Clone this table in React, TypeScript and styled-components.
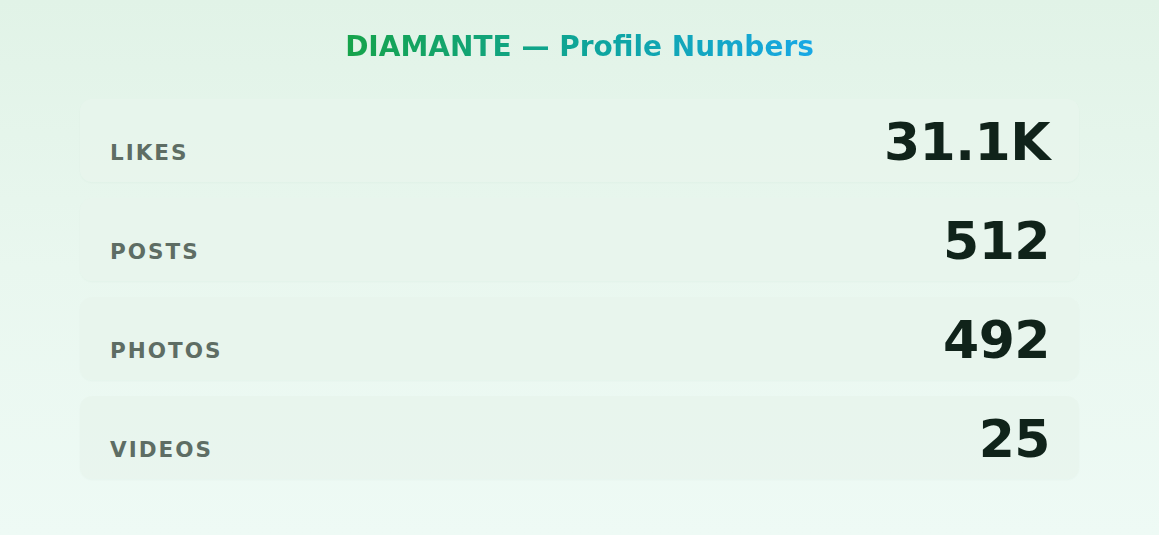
import React from 'react'
import styled, { createGlobalStyle } from 'styled-components'

const GlobalStyle = createGlobalStyle`
  html, body {
    margin: 0;
    padding: 0;
  }
  body {
    font-family: 'DejaVu Sans', Verdana, sans-serif;
    background: linear-gradient(180deg, #e1f3e7 0%, #e9f7ef 50%, #eefaf5 100%);
    min-height: 535px;
  }
`

const Page = styled.div`
  min-height: 535px;
  box-sizing: border-box;
  padding: 30px 0 40px;
  display: flex;
  flex-direction: column;
  align-items: center;
`

const Title = styled.h1`
  margin: 0 0 36px;
  font-size: 28px;
  font-weight: bold;
  line-height: normal;
  background: linear-gradient(90deg, #16a34a 0%, #0ea5a0 55%, #18a8e6 100%);
  -webkit-background-clip: text;
  background-clip: text;
  color: transparent;
`

const List = styled.div`
  width: 999px;
  display: flex;
  flex-direction: column;
  gap: 16px;
`

const Row = styled.div`
  display: flex;
  align-items: baseline;
  justify-content: space-between;
  padding: 13px 29px 10px 30px;
  border-radius: 12px;
  background: rgba(232, 245, 236, 0.85);
  box-shadow: 0 1px 2px rgba(30, 90, 50, 0.03);
`

const Label = styled.span`
  font-size: 21.5px;
  font-weight: bold;
  letter-spacing: 2px;
  text-transform: uppercase;
  color: #5e6d64;
`

const Value = styled.span`
  font-size: 52px;
  font-weight: bold;
  line-height: normal;
  letter-spacing: -0.5px;
  color: #10231a;
`

const stats = [
  { label: 'Likes', value: '31.1K' },
  { label: 'Posts', value: '512' },
  { label: 'Photos', value: '492' },
  { label: 'Videos', value: '25' },
]

export default function App() {
  return (
    <>
      <GlobalStyle />
      <Page>
        <Title>DIAMANTE — Profile Numbers</Title>
        <List>
          {stats.map((s) => (
            <Row key={s.label}>
              <Label>{s.label}</Label>
              <Value>{s.value}</Value>
            </Row>
          ))}
        </List>
      </Page>
    </>
  )
}
